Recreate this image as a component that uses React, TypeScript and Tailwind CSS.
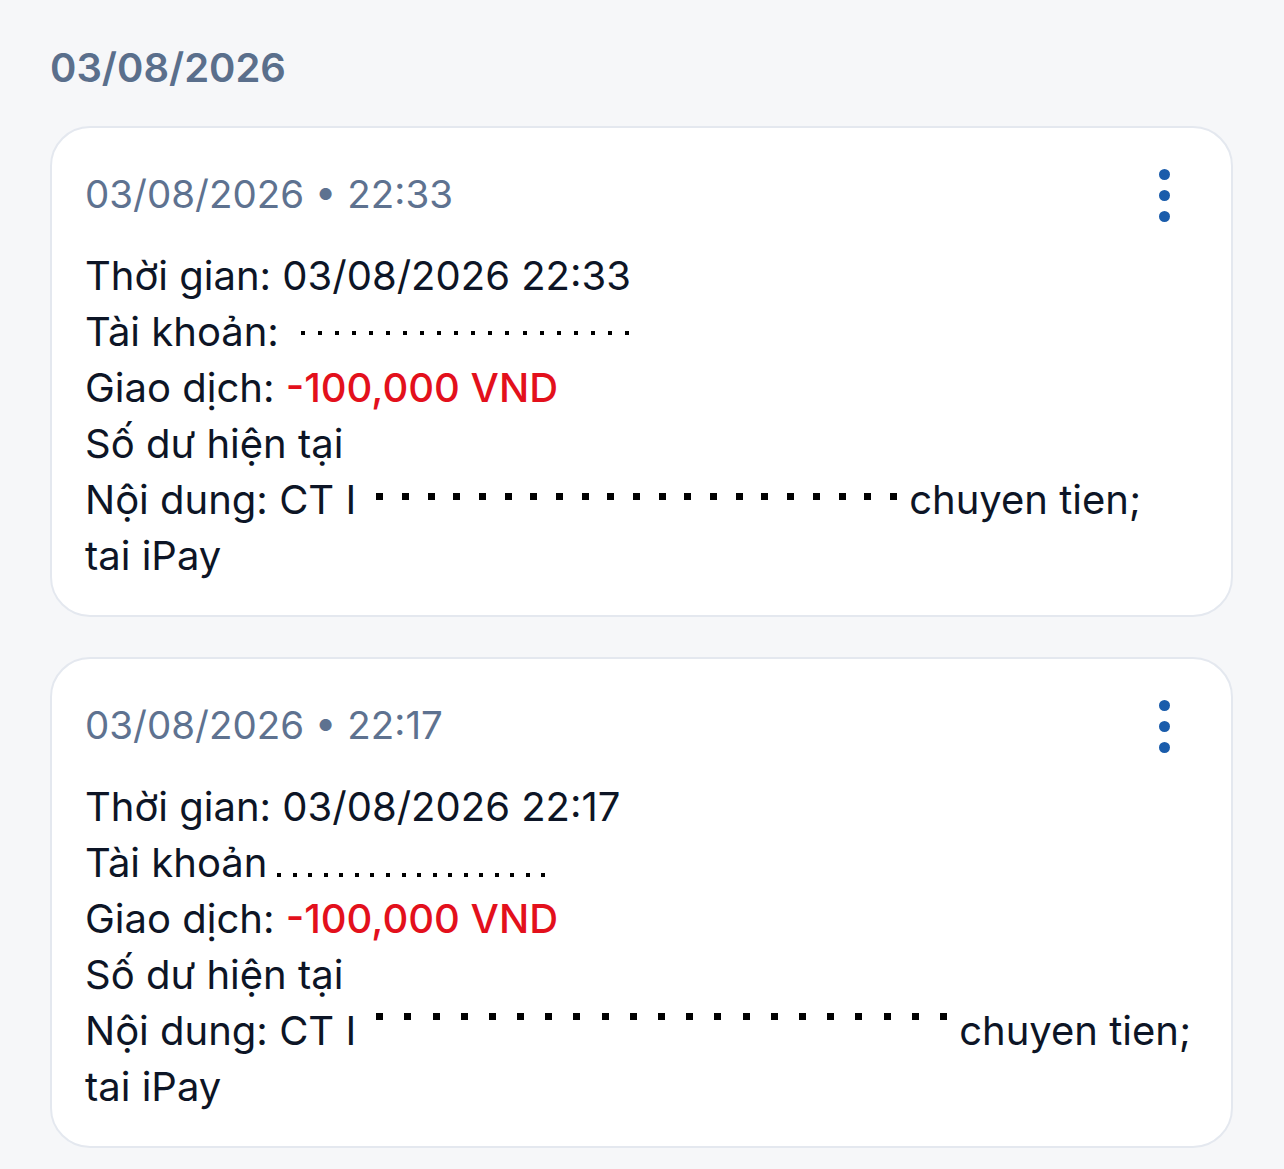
import { ReactNode } from "react";

const Dots = ({
  count,
  width,
  size,
  shift,
  gapLeft,
}: {
  count: number;
  width: number;
  size: number;
  shift: number;
  gapLeft: number;
}) => {
  return (
    <span
      className="inline-flex justify-between align-baseline"
      style={{ width, marginLeft: gapLeft, transform: `translateY(${shift}px)` }}
    >
      {Array.from({ length: count }).map((_, i) => (
        <span key={i} className="bg-black inline-block" style={{ width: size, height: size }} />
      ))}
    </span>
  );
};

const Kebab = () => {
  return (
    <div className="flex flex-col gap-[10px] pt-[3px]">
      <span className="w-[11px] h-[11px] rounded-full bg-[#1a5cab]" />
      <span className="w-[11px] h-[11px] rounded-full bg-[#1a5cab]" />
      <span className="w-[11px] h-[11px] rounded-full bg-[#1a5cab]" />
    </div>
  );
};

const TxCard = ({ stamp, children }: { stamp: string; children: ReactNode }) => {
  return (
    <div className="bg-white border-2 border-[#e4e8ef] rounded-[40px] pl-[33px] pr-[61px] pt-[38px] pb-[31px]">
      <div className="flex items-start justify-between">
        <p className="text-[38.5px] leading-[56px] text-[#5e7290]">{stamp}</p>
        <Kebab />
      </div>
      <div className="mt-[26px] text-[40px] leading-[56px] text-[#0d1526]">{children}</div>
    </div>
  );
};

export default function App() {
  return (
    <div
      className="min-h-[1169px] bg-[#f6f7f9] px-[50px] pt-[40px]"
      style={{ fontFamily: "Inter, 'Noto Sans', sans-serif" }}
    >
      <h2 className="text-[40px] leading-[56px] font-semibold text-[#5a6f8c]">03/08/2026</h2>
      <div className="mt-[30px] flex flex-col gap-[40px] w-[1183px]">
        <TxCard stamp="03/08/2026 • 22:33">
          <p>Thời gian: 03/08/2026 22:33</p>
          <p className="whitespace-nowrap">
            Tài khoản:
            <Dots count={20} width={328} size={4} shift={-11} gapLeft={22} />
          </p>
          <p>
            Giao dịch: <span className="text-[#e3101c] font-medium">-100,000 VND</span>
          </p>
          <p>Số dư hiện tại</p>
          <p className="whitespace-nowrap">
            Nội dung: CT I
            <Dots count={21} width={521} size={7} shift={-14} gapLeft={20} />
            <span className="ml-[12px]">chuyen tien;</span>
          </p>
          <p>tai iPay</p>
        </TxCard>
        <TxCard stamp="03/08/2026 • 22:17">
          <p>Thời gian: 03/08/2026 22:17</p>
          <p className="whitespace-nowrap">
            Tài khoản
            <Dots count={18} width={268} size={4} shift={0} gapLeft={10} />
          </p>
          <p>
            Giao dịch: <span className="text-[#e3101c] font-medium">-100,000 VND</span>
          </p>
          <p>Số dư hiện tại</p>
          <p className="whitespace-nowrap">
            Nội dung: CT I
            <Dots count={21} width={571} size={7} shift={-25} gapLeft={20} />
            <span className="ml-[12px]">chuyen tien;</span>
          </p>
          <p>tai iPay</p>
        </TxCard>
      </div>
    </div>
  );
}
